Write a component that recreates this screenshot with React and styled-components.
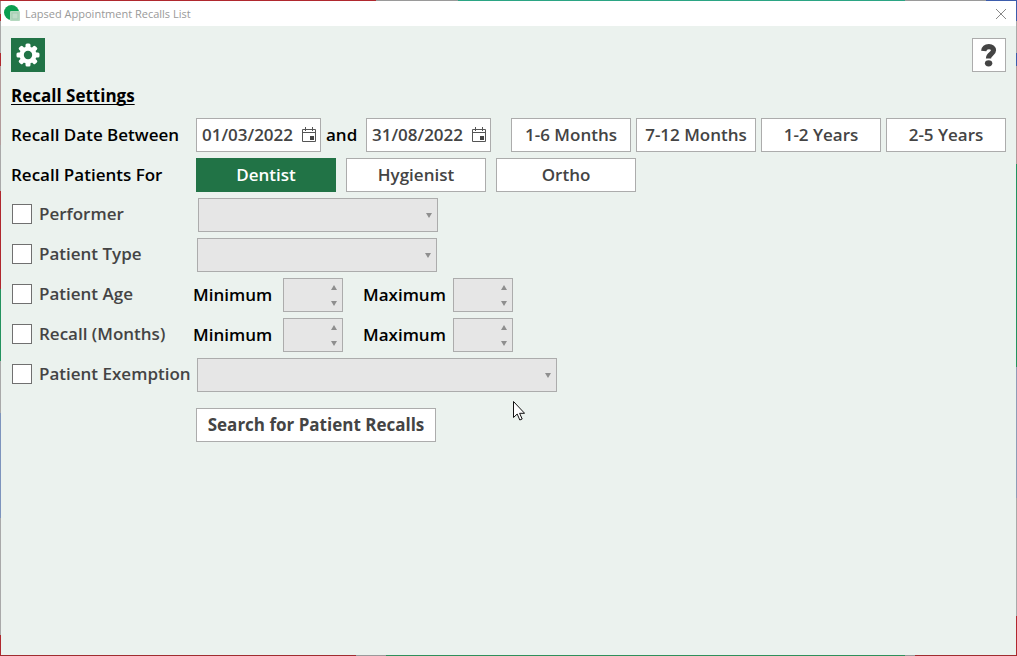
import React, { useState } from 'react';
import styled, { createGlobalStyle, css } from 'styled-components';

const GlobalStyle = createGlobalStyle`
  * {
    box-sizing: border-box;
  }
  body {
    margin: 0;
    background: #ebf2ee;
    color: #000;
    font-family: 'Open Sans', 'Noto Sans', sans-serif;
    font-size: 17px;
    font-weight: 600;
    line-height: 24px;
  }
  button, input, select {
    font: inherit;
  }
`;

/* the desktop behind shows as a thin coloured line round the window */
const Desktop = styled.div`
  display: grid;
  grid-template-columns: 1px 1fr 1px;
  grid-template-rows: 1px 1fr 1px;
  min-height: 100vh;
`;

const TopEdge = styled.div`
  grid-column: 1 / -1;
  background: linear-gradient(to right, #b0282e 37%, #9a9a9a 37% 45%, #2ba584 45% 89%, #9a9a9a 89% 97%, #3c5cab 97%);
`;

const LeftEdge = styled.div`
  background: linear-gradient(#a88f8f 2%, #b0282e 2% 3%, #a9a9a9 3% 8%, #b0282e 8% 10%, #b29c9c 10% 22%, #a9a9a9 22% 29%, #b0282e 29% 44%, #23935f 44% 55%, #a9a9a9 55% 63%, #7d94bd 63% 79%, #a9a9a9 79% 97%, #b0282e 97%);
`;

const RightEdge = styled.div`
  background: linear-gradient(#3c5cab 3%, #a9a9a9 3% 8%, #3c5cab 8% 10%, #b29c9c 10% 25%, #23935f 25% 56%, #8f9db5 56% 76%, #a9a9a9 76% 94%, #b0282e 94%);
`;

const BottomEdge = styled.div`
  grid-column: 1 / -1;
  background: linear-gradient(to right, #a02c30 35%, #9a9a9a 35% 38%, #2f8f5b 38% 89%, #9a9a9a 89% 90%, #a02c30 90%);
`;

const Window = styled.main`
  background: #ebf2ee;
`;

const TitleBar = styled.header`
  display: flex;
  align-items: center;
  height: 25px;
  padding: 0 6px 0 3px;
  background: #fff;
  color: #999;
`;

const Title = styled.h1`
  flex: 1;
  margin: 0 0 0 4px;
  font-size: 11px;
  font-weight: 400;
  line-height: 16px;
`;

const CloseButton = styled.button`
  display: flex;
  padding: 3px;
  border: 0;
  background: none;
`;

const Content = styled.form`
  padding: 12px 10px;
`;

const Toolbar = styled.div`
  display: flex;
  justify-content: space-between;
  margin-bottom: 12px;
`;

const Button = styled.button`
  display: flex;
  align-items: center;
  justify-content: center;
  width: ${({ $width }) => $width}px;
  height: 34px;
  padding: 0;
  border: 1px solid #acacac;
  background: #fff;
  color: #444;
  font-weight: ${({ $bold }) => ($bold ? 700 : 600)};
  white-space: nowrap;

  ${({ $active }) => $active && css`
    border-color: #217346;
    background: #217346;
    color: #fff;
  `}
`;

const Heading = styled.h2`
  margin: 0 0 10px;
  font-size: 17px;
  font-weight: 700;
  line-height: 24px;
  text-decoration: underline;
  text-decoration-thickness: 1px;
  text-decoration-skip-ink: none;
  text-underline-offset: 2px;
`;

const Rows = styled.div`
  display: grid;
  gap: 6px;
`;

const Row = styled.div`
  display: grid;
  grid-template-columns: 185px 1fr;
  align-items: center;
  min-height: 34px;
`;

const Cells = styled.div`
  display: flex;
  align-items: center;
  gap: ${({ $gap }) => $gap || 0}px;
  padding-left: ${({ $indent }) => $indent || 0}px;
`;

const And = styled.span`
  width: 35px;
`;

const Presets = styled.div`
  display: flex;
  gap: 5px;
  margin-left: 15px;
`;

const DateBox = styled.div`
  display: flex;
  align-items: center;
  width: 125px;
  height: 34px;
  padding: 0 4px 0 5px;
  border: 1px solid #acacac;
  background: #fff;
  color: #444;
`;

const DateInput = styled.input`
  flex: 1;
  min-width: 0;
  padding: 0;
  border: 0;
  background: none;
  color: inherit;
`;

const PickerButton = styled.button`
  display: flex;
  padding: 0;
  border: 0;
  background: none;
`;

const CheckLabel = styled.label`
  display: flex;
  align-items: center;
  gap: 7px;
  padding-bottom: 2px;
  color: #444;
  white-space: nowrap;
`;

const CheckBox = styled.input`
  appearance: none;
  width: 20px;
  height: 20px;
  margin: 0 0 0 1px;
  border: 1px solid #707070;
  background: #fff;

  &:checked {
    background: #217346;
    box-shadow: inset 0 0 0 3px #fff;
  }
`;

const SelectBox = styled.div`
  display: grid;
  align-items: center;
  width: ${({ $width }) => $width}px;

  > * {
    grid-area: 1 / 1;
  }
  > svg {
    justify-self: end;
    margin-right: 6px;
    pointer-events: none;
  }
`;

const Select = styled.select`
  appearance: none;
  width: 100%;
  height: 34px;
  padding: 0 18px 0 6px;
  border: 1px solid #acacac;
  border-radius: 0;
  background: #e6e6e6;
  opacity: 1;
`;

const LimitLabel = styled.label`
  width: 90px;
`;

const SpinBox = styled.div`
  display: flex;
  width: 60px;
  height: 34px;
  margin-right: 20px;
  border: 1px solid #acacac;
  background: #e6e6e6;
`;

const SpinInput = styled.input`
  flex: 1;
  min-width: 0;
  padding: 0 4px;
  border: 0;
  background: none;
`;

const SpinButtons = styled.div`
  display: flex;
  flex-direction: column;
  width: 17px;
`;

const SpinButton = styled.button`
  display: flex;
  flex: 1;
  align-items: center;
  justify-content: center;
  padding: 0;
  border: 0;
  background: none;
`;

const SearchRow = styled.div`
  margin: 16px 0 0 185px;
`;

const Pointer = styled.svg`
  position: absolute;
  top: 401px;
  left: 513px;
  pointer-events: none;
`;

const Arrow = ({ up }) => (
  <svg width="6" height="5" viewBox="0 0 6 5" aria-hidden="true">
    <path d={up ? 'M0 5h6L3 0z' : 'M0 0h6L3 5z'} fill="#8f8f8f" />
  </svg>
);

const Logo = () => (
  <svg width="17" height="17" viewBox="0 0 17 17" aria-hidden="true">
    <circle cx="7.5" cy="7.5" r="7.5" fill="#0b9e50" />
    <rect x="6" y="6" width="10" height="10" rx="1" fill="#b5d9c0" />
    <rect x="8" y="8" width="6" height="6" fill="#bfdcc8" stroke="#a3cbb0" />
  </svg>
);

const Gear = () => (
  <svg width="24" height="24" viewBox="0 0 24 24" aria-hidden="true">
    <g fill="#fff">
      {[0, 45, 90, 135].map((angle) => (
        <rect key={angle} x="9.5" y="0.5" width="5" height="23" rx="1.5" transform={`rotate(${angle} 12 12)`} />
      ))}
      <circle cx="12" cy="12" r="8.6" />
    </g>
    <circle cx="12" cy="12" r="4.2" fill="#217346" />
  </svg>
);

const Help = () => (
  <svg width="16" height="24" viewBox="0 0 16 24" aria-hidden="true">
    <path d="M2.700 8C3.100 5 5 3.600 7.900 3.600c3 0 4.600 1.500 4.600 3.700 0 3.900-5 3.700-5 8.200" fill="none" stroke="#444" strokeWidth="5.200" />
    <ellipse cx="7.600" cy="20.300" rx="3.700" ry="3.100" fill="#444" />
  </svg>
);

const Calendar = () => (
  <svg width="14" height="16" viewBox="0 0 14 16" aria-hidden="true">
    <path d="M.5 2.500h13v12H.5zM.5 5.500h13M3.500 0v4M10.500 0v4" fill="none" stroke="#555" />
    <path d="M8 9h4v4H8z" fill="#444" />
  </svg>
);

const DateField = ({ label, value, onChange }) => (
  <DateBox>
    <DateInput aria-label={label} value={value} onChange={(e) => onChange(e.target.value)} />
    <PickerButton type="button" aria-label={`Pick ${label}`}><Calendar /></PickerButton>
  </DateBox>
);

const Check = ({ children, checked, onChange }) => (
  <CheckLabel>
    <CheckBox type="checkbox" checked={checked} onChange={onChange} />
    {children}
  </CheckLabel>
);

const DropDown = ({ label, width, enabled }) => (
  <SelectBox $width={width}>
    <Select aria-label={label} disabled={!enabled} />
    <Arrow />
  </SelectBox>
);

const Spinner = ({ id, enabled }) => {
  const [value, setValue] = useState('');
  const step = (by) => setValue(String(Math.max(0, Number(value) + by)));

  return (
    <SpinBox>
      <SpinInput id={id} inputMode="numeric" value={value} disabled={!enabled} onChange={(e) => setValue(e.target.value)} />
      <SpinButtons>
        <SpinButton type="button" aria-label="Increase" disabled={!enabled} onClick={() => step(1)}><Arrow up /></SpinButton>
        <SpinButton type="button" aria-label="Decrease" disabled={!enabled} onClick={() => step(-1)}><Arrow /></SpinButton>
      </SpinButtons>
    </SpinBox>
  );
};

const Limits = ({ name, enabled }) => (
  <Cells>
    <LimitLabel htmlFor={`${name}-min`}>Minimum</LimitLabel>
    <Spinner id={`${name}-min`} enabled={enabled} />
    <LimitLabel htmlFor={`${name}-max`}>Maximum</LimitLabel>
    <Spinner id={`${name}-max`} enabled={enabled} />
  </Cells>
);

const LimitRow = styled(Row)`
  grid-template-columns: 182px 1fr;
`;

const presets = ['1-6 Months', '7-12 Months', '1-2 Years', '2-5 Years'];
const roles = ['Dentist', 'Hygienist', 'Ortho'];

const App = () => {
  const [from, setFrom] = useState('01/03/2022');
  const [to, setTo] = useState('31/08/2022');
  const [role, setRole] = useState('Dentist');
  const [filters, setFilters] = useState({});

  const toggle = (name) => () => setFilters({ ...filters, [name]: !filters[name] });

  return (
    <>
      <GlobalStyle />
      <Desktop>
        <TopEdge />
        <LeftEdge />
        <Window>
          <TitleBar>
            <Logo />
            <Title>Lapsed Appointment Recalls List</Title>
            <CloseButton type="button" aria-label="Close">
              <svg width="12" height="12" viewBox="0 0 12 12"><path d="M1 1l10 10M11 1L1 11" stroke="#888" /></svg>
            </CloseButton>
          </TitleBar>
          <Content onSubmit={(e) => e.preventDefault()}>
            <Toolbar>
              <Button type="button" $width={34} $active aria-label="Settings"><Gear /></Button>
              <Button type="button" $width={34} aria-label="Help"><Help /></Button>
            </Toolbar>
            <Heading>Recall Settings</Heading>
            <Rows>
              <Row>
                <span>Recall Date Between</span>
                <Cells $gap={5}>
                  <DateField label="start date" value={from} onChange={setFrom} />
                  <And>and</And>
                  <DateField label="end date" value={to} onChange={setTo} />
                  <Presets>
                    {presets.map((preset) => (
                      <Button type="button" key={preset} $width={120}>{preset}</Button>
                    ))}
                  </Presets>
                </Cells>
              </Row>
              <Row>
                <span>Recall Patients For</span>
                <Cells $gap={10}>
                  {roles.map((name) => (
                    <Button type="button" key={name} $width={140} $active={role === name} onClick={() => setRole(name)}>{name}</Button>
                  ))}
                </Cells>
              </Row>
              <Row>
                <Check checked={!!filters.performer} onChange={toggle('performer')}>Performer</Check>
                <Cells $indent={2}><DropDown label="Performer" width={240} enabled={filters.performer} /></Cells>
              </Row>
              <Row>
                <Check checked={!!filters.type} onChange={toggle('type')}>Patient Type</Check>
                <Cells $indent={1}><DropDown label="Patient Type" width={240} enabled={filters.type} /></Cells>
              </Row>
              <LimitRow>
                <Check checked={!!filters.age} onChange={toggle('age')}>Patient Age</Check>
                <Limits name="age" enabled={filters.age} />
              </LimitRow>
              <LimitRow>
                <Check checked={!!filters.recall} onChange={toggle('recall')}>Recall (Months)</Check>
                <Limits name="recall" enabled={filters.recall} />
              </LimitRow>
              <Row>
                <Check checked={!!filters.exemption} onChange={toggle('exemption')}>Patient Exemption</Check>
                <Cells $indent={1}><DropDown label="Patient Exemption" width={360} enabled={filters.exemption} /></Cells>
              </Row>
            </Rows>
            <SearchRow>
              <Button type="submit" $width={240} $bold>Search for Patient Recalls</Button>
            </SearchRow>
          </Content>
        </Window>
        <RightEdge />
        <BottomEdge />
      </Desktop>
      <Pointer width="12" height="20" viewBox="0 0 12 20" aria-hidden="true">
        <path d="M.5.500v16l3.700-3.500 2.600 6 2.400-1-2.600-5.700h5z" fill="#fff" stroke="#111" />
      </Pointer>
    </>
  );
};

export default App;
